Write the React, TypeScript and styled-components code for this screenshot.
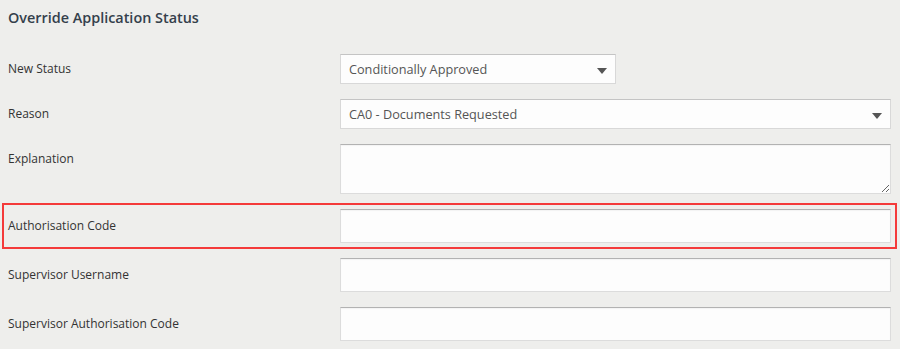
import styled, { createGlobalStyle } from "styled-components";

const GlobalStyle = createGlobalStyle`
  html, body {
    margin: 0;
    padding: 0;
    background: #eeeeec;
  }
  * {
    box-sizing: border-box;
  }
`;

function App() {
  return (
    <Page>
      <GlobalStyle />
      <Title>Override Application Status</Title>

      <Form>
        <Row>
          <Label>New Status</Label>
          <SelectWrap $width="276px">
            <Select defaultValue="ca">
              <option value="ca">Conditionally Approved</option>
            </Select>
            <Arrow />
          </SelectWrap>
        </Row>

        <Row>
          <Label>Reason</Label>
          <SelectWrap>
            <Select defaultValue="ca0">
              <option value="ca0">CA0 - Documents Requested</option>
            </Select>
            <Arrow />
          </SelectWrap>
        </Row>

        <Row $top>
          <Label>Explanation</Label>
          <TextArea />
        </Row>

        <Row $highlight>
          <Label>Authorisation Code</Label>
          <Input type="text" />
        </Row>

        <Row>
          <Label>Supervisor Username</Label>
          <Input type="text" />
        </Row>

        <Row>
          <Label>Supervisor Authorisation Code</Label>
          <Input type="text" />
        </Row>
      </Form>
    </Page>
  );
}

function Arrow() {
  return (
    <ArrowIcon width="10" height="6" viewBox="0 0 10 6">
      <path d="M0 0 L10 0 L5 6 Z" fill="#555" />
    </ArrowIcon>
  );
}

export default App;

const Page = styled.div`
  min-height: 100vh;
  padding: 8px 9px 8px 8px;
  background: #eeeeec;
  font-family: "Open Sans", "Liberation Sans", sans-serif;
  color: #333;
`;

const Title = styled.h2`
  margin: 0;
  font-size: 14.4px;
  line-height: 20px;
  font-weight: 600;
  color: #34404b;
`;

const Form = styled.div`
  display: flex;
  flex-direction: column;
  gap: 15px;
  margin-top: 26px;
`;

const Row = styled.div<{ $top?: boolean; $highlight?: boolean }>`
  display: grid;
  grid-template-columns: 332px 1fr;
  align-items: ${(p) => (p.$top ? "start" : "center")};
  outline: ${(p) => (p.$highlight ? "2px solid #f43a3a" : "none")};
  outline-offset: 4px;
`;

const Label = styled.div`
  font-size: 12px;
  line-height: 30px;
  color: #333;
`;

const SelectWrap = styled.div<{ $width?: string }>`
  position: relative;
  width: ${(p) => p.$width ?? "100%"};
  height: 30px;
`;

const Select = styled.select`
  appearance: none;
  width: 100%;
  height: 100%;
  margin: 0;
  padding: 0 28px 0 8px;
  font-family: "Open Sans", "Liberation Sans", sans-serif;
  font-size: 12.7px;
  color: #555;
  background: #fdfdfd;
  border: 1px solid #d8d8d8;
  border-top-color: #c4c4c4;
  border-radius: 0;
  outline: none;
`;

const ArrowIcon = styled.svg`
  position: absolute;
  right: 9px;
  top: 14px;
  pointer-events: none;
`;

const fieldBase = `
  display: block;
  width: 100%;
  margin: 0;
  padding: 4px 8px;
  font-family: "Open Sans", "Liberation Sans", sans-serif;
  font-size: 12.7px;
  color: #555;
  background: #fdfdfd;
  border: 1px solid #dcdcdc;
  border-top-color: #b2b2b2;
  border-radius: 0;
  box-shadow: inset 0 1px 1px rgba(0, 0, 0, 0.04);
  outline: none;
`;

const TextArea = styled.textarea`
  ${fieldBase}
  height: 50px;
  resize: vertical;
`;

const Input = styled.input`
  ${fieldBase}
  height: 34px;
`;
